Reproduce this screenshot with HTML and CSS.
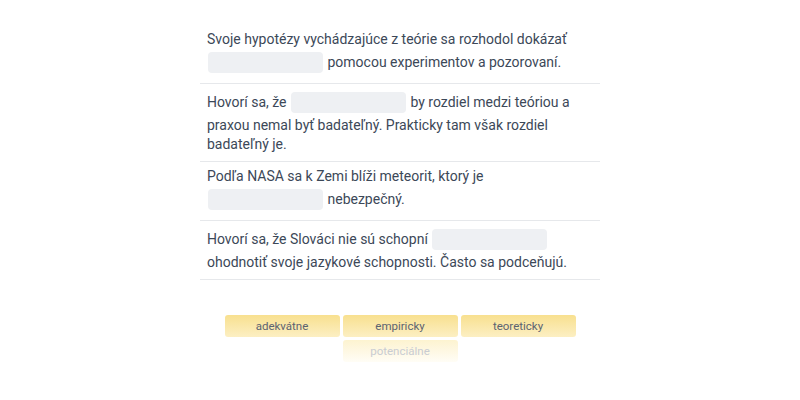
FILE: index.html
```html
<!DOCTYPE html>
<html lang="sk">
<head>
<meta charset="utf-8">
<link rel="stylesheet" href="styles.css">
</head>
<body>
<div class="page">
  <div class="list">
    <div class="row">Svoje hypotézy vychádzajúce z teórie sa rozhodol dokázať <span class="blank"></span> pomocou experimentov a pozorovaní.</div>
    <div class="row">Hovorí sa, že <span class="blank"></span> by rozdiel medzi teóriou a praxou nemal byť badateľný. Prakticky tam však rozdiel badateľný je.</div>
    <div class="row">Podľa NASA sa k Zemi blíži meteorit, ktorý je <span class="blank"></span> nebezpečný.</div>
    <div class="row">Hovorí sa, že Slováci nie sú schopní <span class="blank"></span> ohodnotiť svoje jazykové schopnosti. Často sa podceňujú.</div>
  </div>
  <div class="chips">
    <div class="chip">adekvátne</div>
    <div class="chip">empiricky</div>
    <div class="chip">teoreticky</div>
    <div class="chip chip-faded">potenciálne</div>
  </div>
</div>
</body>
</html>
```

FILE: styles.css
```css
html, body {
  margin: 0;
  padding: 0;
  background: #ffffff;
}

body {
  font-family: Roboto, "Liberation Sans", sans-serif;
  color: #3c4858;
}

.page {
  width: 400px;
  margin: 0 auto;
  padding-top: 25px;
}

.list {
  display: flex;
  flex-direction: column;
}

.row {
  font-size: 14px;
  line-height: 19px;
  padding: 5px 7px 7px 7px;
  border-bottom: 1px solid #e6e8eb;
}

.blank {
  display: inline-block;
  width: 115px;
  height: 21px;
  margin: 3px 1px 3px 1px;
  vertical-align: -9.5px;
  background: #eef0f3;
  border-radius: 4px;
}

.chips {
  display: flex;
  flex-wrap: wrap;
  justify-content: center;
  gap: 3px;
  width: 351px;
  margin: 35px auto 0 auto;
}

.chip {
  width: 115px;
  height: 22px;
  box-sizing: border-box;
  display: flex;
  align-items: center;
  justify-content: center;
  font-size: 11.5px;
  color: #5c6370;
  border-radius: 3px;
  background: linear-gradient(to bottom, #f8e08f, #fcefc3);
}

.chip-faded {
  color: #c9ccd2;
  background: linear-gradient(to bottom, #fdf3d0, #fffdf6);
}
```
